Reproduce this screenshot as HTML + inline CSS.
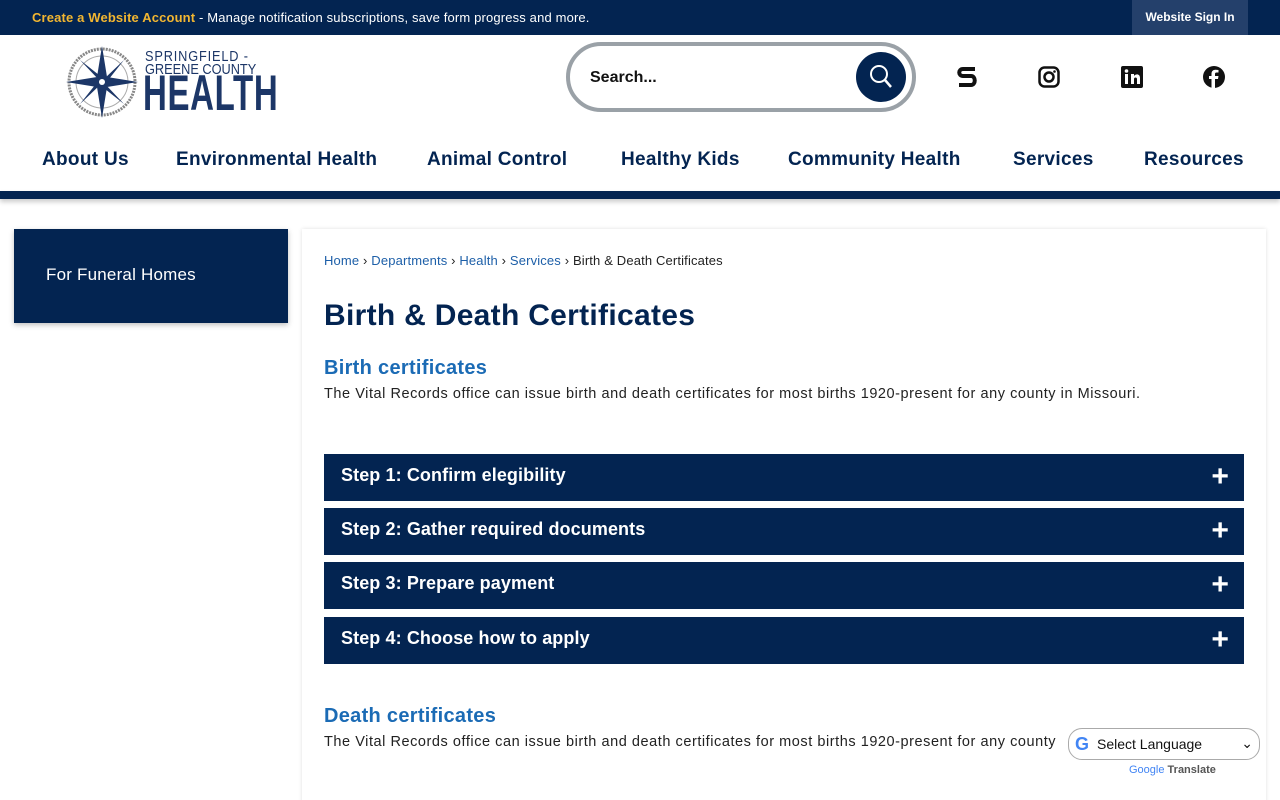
<!DOCTYPE html>
<html><head><meta charset="utf-8"><style>
*{margin:0;padding:0;box-sizing:border-box}
html,body{width:1280px;height:800px;overflow:hidden}
body{font-family:"Liberation Sans",sans-serif;background:#fff;position:relative;color:#111}
.top{position:absolute;left:0;top:0;width:1280px;height:35px;background:#032451}
.top .msg{position:absolute;left:32px;top:10px;font-size:13px;color:#fff;letter-spacing:.15px}
.top .msg b{color:#f2b631}
.top .sign{position:absolute;left:1132px;top:0;width:116px;height:35px;background:#24406b;color:#fff;font-size:12px;font-weight:bold;text-align:center;line-height:35px}
.search{position:absolute;left:566px;top:42px;width:350px;height:70px;border:4px solid #9aa1a7;border-radius:35px;background:#fff}
.search span{position:absolute;left:20px;top:23px;font-size:16px;font-weight:bold;color:#111}
.search .btn{position:absolute;left:286px;top:6px;width:50px;height:50px;border-radius:50%;background:#032451}
.nav{position:absolute;top:149px;font-size:19px;font-weight:bold;color:#032451;letter-spacing:.3px}
.bar{position:absolute;left:0;top:191px;width:1280px;height:8px;background:#032451;box-shadow:0 3px 5px rgba(0,0,0,.2)}
.side{position:absolute;left:14px;top:229px;width:274px;height:94px;background:#032451;box-shadow:0 2px 5px rgba(0,0,0,.25);color:#fff;font-size:17px;padding:36px 0 0 32px;letter-spacing:.2px}
.card{position:absolute;left:302px;top:229px;width:964px;height:600px;background:#fff;box-shadow:0 0 4px rgba(0,0,0,.12)}
.bc{position:absolute;left:324px;top:253px;font-size:13px;color:#222;letter-spacing:.15px}
.bc a{color:#1d5fa8;text-decoration:none}
h1{position:absolute;left:324px;top:299px;font-size:30px;color:#032451;letter-spacing:.3px}
h2{position:absolute;left:324px;font-size:20px;color:#1b6bb5;letter-spacing:.3px}
p{position:absolute;left:324px;font-size:14.5px;color:#222;letter-spacing:.55px}
.acc{position:absolute;left:324px;width:920px;height:47px;background:#032451;color:#fff;font-size:18px;font-weight:bold;padding:11px 0 0 17px;letter-spacing:.1px}
.acc i{position:absolute;right:15px;top:10px;font-style:normal;font-size:30px;line-height:26px;font-weight:bold}
.gt{position:absolute;left:1068px;top:728px;width:192px;height:32px;border:1px solid #aaa;border-radius:14px;background:#fff;font-size:14px;padding:7px 0 0 28px}
</style></head><body>
<div class="top"><div class="msg"><b>Create a Website Account</b> - Manage notification subscriptions, save form progress and more.</div><div class="sign">Website Sign In</div></div>
<svg style="position:absolute;left:64px;top:44px" width="76" height="76" viewBox="0 0 76 76"><circle cx="38" cy="38" r="33" fill="none" stroke="#888" stroke-width="3" stroke-dasharray="2 1"/><circle cx="38" cy="38" r="26" fill="none" stroke="#aaa" stroke-width="1"/><path d="M38 2L43 33L74 38L43 43L38 74L33 43L2 38L33 33Z" fill="#1c3667"/><path d="M16 16L40 35L60 16L41 40L60 60L36 41L16 60L35 36Z" fill="#1c3667"/><circle cx="38" cy="38" r="3" fill="#fff"/></svg>
<div style="position:absolute;left:145px;top:50px;color:#1c3667;font-size:15px;line-height:13px;letter-spacing:1px;transform:scaleX(.85);transform-origin:left">SPRINGFIELD -<br><span style="letter-spacing:0">GREENE COUNTY</span></div>
<div style="position:absolute;left:143px;top:70px;color:#1c3667;font-size:50px;font-weight:bold;line-height:46px;transform:scaleX(.66);transform-origin:left;letter-spacing:1px">HEALTH</div>
<div class="search"><span>Search...</span><div class="btn"><svg width="50" height="50"><circle cx="23" cy="22" r="8" fill="none" stroke="#fff" stroke-width="2"/><path d="M29 28L35 35" stroke="#fff" stroke-width="2.5"/></svg></div></div>
<svg style="position:absolute;left:955px;top:65px" width="24" height="24"><path d="M20 4H8C3 4 3 11 8 11H16C21 11 21 20 16 20H4" fill="none" stroke="#111" stroke-width="4"/></svg>
<svg style="position:absolute;left:1038px;top:66px" width="22" height="22"><rect x="1.5" y="1.5" width="19" height="19" rx="5" fill="none" stroke="#111" stroke-width="2.5"/><circle cx="11" cy="11" r="4.5" fill="none" stroke="#111" stroke-width="2.5"/><circle cx="16.5" cy="5.5" r="1.3" fill="#111"/></svg>
<svg style="position:absolute;left:1121px;top:66px" width="22" height="22"><rect width="22" height="22" rx="2" fill="#111"/><rect x="4" y="8" width="3" height="10" fill="#fff"/><circle cx="5.5" cy="5" r="1.8" fill="#fff"/><path d="M10 18V8h3v2c1-2 6-3 6 2v6h-3v-5c0-2-3-2-3 0v5z" fill="#fff"/></svg>
<svg style="position:absolute;left:1203px;top:66px" width="22" height="22"><circle cx="11" cy="11" r="11" fill="#111"/><path d="M12 22V13h3l.5-3H12V8c0-1 .5-1.5 1.5-1.5H15.5V4c-1 0-2-.2-3-.2-2.5 0-4 1.5-4 4V10H6v3h2.5v9z" fill="#fff"/></svg>
<div class="nav" style="left:42px">About Us</div>
<div class="nav" style="left:176px">Environmental Health</div>
<div class="nav" style="left:427px">Animal Control</div>
<div class="nav" style="left:621px">Healthy Kids</div>
<div class="nav" style="left:788px">Community Health</div>
<div class="nav" style="left:1013px">Services</div>
<div class="nav" style="left:1144px">Resources</div>
<div class="bar"></div>
<div class="side">For Funeral Homes</div>
<div class="card"></div>
<div class="bc"><a>Home</a> › <a>Departments</a> › <a>Health</a> › <a>Services</a> › Birth &amp; Death Certificates</div>
<h1>Birth &amp; Death Certificates</h1>
<h2 style="top:357px">Birth certificates</h2>
<p style="top:386px">The Vital Records office can issue birth and death certificates for most births 1920-present for any county in Missouri.</p>
<div class="acc" style="top:454px">Step 1: Confirm elegibility<i>+</i></div>
<div class="acc" style="top:508px">Step 2: Gather required documents<i>+</i></div>
<div class="acc" style="top:562px">Step 3: Prepare payment<i>+</i></div>
<div class="acc" style="top:617px">Step 4: Choose how to apply<i>+</i></div>
<h2 style="top:705px">Death certificates</h2>
<p style="top:734px">The Vital Records office can issue birth and death certificates for most births 1920-present for any county</p>
<div class="gt"><span style="position:absolute;left:6px;top:5px;font-weight:bold;font-size:18px;color:#4285f4">G</span>Select Language<span style="position:absolute;right:6px;top:6px">⌄</span></div>
<div style="position:absolute;left:1129px;top:764px;font-size:11px;color:#555"><span style="color:#4285f4">Google</span> <b>Translate</b></div>
</body></html>
